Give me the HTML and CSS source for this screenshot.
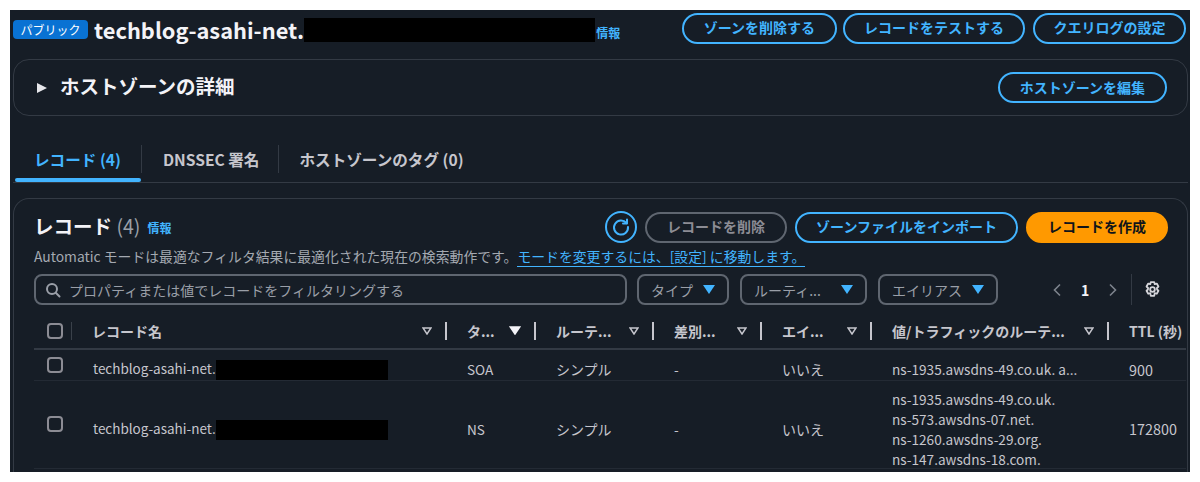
FILE: index.html
```html
<!DOCTYPE html>
<html lang="ja">
<head>
    <meta charset="UTF-8">
    <meta name="viewport" content="width=device-width, initial-scale=1.0">
    <title>ホストゾーン</title>
    <link rel="stylesheet" href="styles.css">
</head>
<body>
    <div class="frame">
        <!-- Page header -->
        <div class="page-header">
            <span class="badge">パブリック</span>
            <h1 class="zone-name">techblog-asahi-net.<span class="redact redact-title"></span></h1>
            <a class="info info-title" href="#">情報</a>
            <div class="header-actions">
                <button class="btn btn-zone">ゾーンを削除する</button>
                <button class="btn btn-test">レコードをテストする</button>
                <button class="btn btn-log">クエリログの設定</button>
            </div>
        </div>

        <!-- Zone details -->
        <div class="card details">
            <span class="caret-right"></span>
            <h2 class="details-title">ホストゾーンの詳細</h2>
            <button class="btn btn-edit">ホストゾーンを編集</button>
        </div>

        <!-- Tabs -->
        <div class="tabs">
            <a class="tab tab-active" href="#">レコード (4)</a>
            <a class="tab tab-dnssec" href="#">DNSSEC 署名</a>
            <a class="tab tab-tags" href="#">ホストゾーンのタグ (0)</a>
        </div>

        <!-- Records -->
        <div class="card records">
            <div class="records-head">
                <h2 class="records-title">レコード <span class="count">(4)</span></h2>
                <a class="info" href="#">情報</a>
                <div class="records-actions">
                    <button class="btn-refresh" aria-label="更新">
                        <svg width="20" height="20" viewBox="0 0 20 20" fill="none" stroke="currentColor" stroke-width="2" stroke-linecap="round" stroke-linejoin="round">
                            <path d="M15.5 6.2A7 7 0 1 0 17 10"/>
                            <path d="M16 2.5v4h-4"/>
                        </svg>
                    </button>
                    <button class="btn btn-disabled">レコードを削除</button>
                    <button class="btn btn-import">ゾーンファイルをインポート</button>
                    <button class="btn btn-primary">レコードを作成</button>
                </div>
            </div>
            <p class="mode-text">Automatic モードは最適なフィルタ結果に最適化された現在の検索動作です。<a href="#">モードを変更するには、[設定] に移動します。</a></p>

            <div class="filters">
                <div class="search">
                    <svg width="16" height="16" viewBox="0 0 16 16" fill="none" stroke="currentColor" stroke-width="2" stroke-linecap="round">
                        <circle cx="7" cy="7" r="5"/>
                        <path d="M11 11l3.5 3.5"/>
                    </svg>
                    <span>プロパティまたは値でレコードをフィルタリングする</span>
                </div>
                <div class="select select-type"><span>タイプ</span><i class="caret-down"></i></div>
                <div class="select select-routing"><span>ルーティ...</span><i class="caret-down"></i></div>
                <div class="select select-alias"><span>エイリアス</span><i class="caret-down"></i></div>
                <div class="pager">
                    <svg width="10" height="14" viewBox="0 0 10 14" fill="none" stroke="currentColor" stroke-width="1.6"><path d="M8 1.5L2.5 7 8 12.5"/></svg>
                    <b>1</b>
                    <svg width="10" height="14" viewBox="0 0 10 14" fill="none" stroke="currentColor" stroke-width="1.6"><path d="M2 1.5L7.5 7 2 12.5"/></svg>
                </div>
                <div class="settings">
                    <svg width="17" height="17" viewBox="0 0 16 16" fill="none" stroke="currentColor" stroke-width="1.7" stroke-linejoin="round">
                        <path d="M6.4 1h3.2l.5 2 1.9-.6 1.6 2.8-1.4 1.4.1 1.4 1.3 1.2-1.6 2.8-1.9-.6-.5 2.6H6.4l-.5-2.6-1.9.6-1.6-2.8 1.3-1.2.1-1.4-1.4-1.4L4 2.4l1.9.6z"/>
                        <circle cx="8" cy="8" r="2.2"/>
                    </svg>
                </div>
            </div>

            <table class="record-table">
                <thead>
                    <tr>
                        <th class="col-check"><div class="th-check"><span class="checkbox"></span></div></th>
                        <th class="col-name"><div class="th-inner"><span>レコード名</span><svg class="sort" width="10" height="8" viewBox="0 0 10 8"><path d="M1 1h8L5 7z"/></svg></div></th>
                        <th class="col-type"><div class="th-inner"><span>タ...</span><svg class="sort sort-active" width="12" height="9" viewBox="0 0 10 8"><path d="M1 1h8L5 7z"/></svg></div></th>
                        <th class="col-routing"><div class="th-inner"><span>ルーテ...</span><svg class="sort" width="10" height="8" viewBox="0 0 10 8"><path d="M1 1h8L5 7z"/></svg></div></th>
                        <th class="col-diff"><div class="th-inner"><span>差別...</span><svg class="sort" width="10" height="8" viewBox="0 0 10 8"><path d="M1 1h8L5 7z"/></svg></div></th>
                        <th class="col-alias"><div class="th-inner"><span>エイ...</span><svg class="sort" width="10" height="8" viewBox="0 0 10 8"><path d="M1 1h8L5 7z"/></svg></div></th>
                        <th class="col-value"><div class="th-inner"><span>値/トラフィックのルーテ...</span><svg class="sort" width="10" height="8" viewBox="0 0 10 8"><path d="M1 1h8L5 7z"/></svg></div></th>
                        <th class="col-ttl"><div class="th-inner th-last"><span>TTL (秒)</span></div></th>
                    </tr>
                </thead>
                <tbody>
                    <tr>
                        <td class="cell-check"><span class="checkbox"></span></td>
                        <td>techblog-asahi-net.<span class="redact redact-row"></span></td>
                        <td>SOA</td>
                        <td class="cell-ja">シンプル</td>
                        <td>-</td>
                        <td class="cell-ja">いいえ</td>
                        <td>ns-1935.awsdns-49.co.uk. a...</td>
                        <td class="cell-ttl">900</td>
                    </tr>
                    <tr>
                        <td class="cell-check"><span class="checkbox"></span></td>
                        <td>techblog-asahi-net.<span class="redact redact-row"></span></td>
                        <td>NS</td>
                        <td class="cell-ja">シンプル</td>
                        <td>-</td>
                        <td class="cell-ja">いいえ</td>
                        <td class="cell-values"><div>ns-1935.awsdns-49.co.uk.<br>ns-573.awsdns-07.net.<br>ns-1260.awsdns-29.org.<br>ns-147.awsdns-18.com.</div></td>
                        <td class="cell-ttl">172800</td>
                    </tr>
                </tbody>
            </table>
        </div>
    </div>
</body>
</html>
```

FILE: styles.css
```css
/* General Styles */
* {
    box-sizing: border-box;
}

body {
    font-family: 'Noto Sans CJK JP', 'Noto Sans', sans-serif;
    margin: 0;
    padding: 10px;
    background-color: #fff;
    color: #c6c6cd;
}

.frame {
    height: 462px;
    overflow: hidden;
    background-color: #161d26;
    padding: 0 2px 0 3px;
}

h1, h2, p {
    margin: 0;
}

a {
    color: #42b4ff;
    text-decoration: none;
}

/* Buttons */
.btn {
    font-family: inherit;
    font-size: 14px;
    font-weight: 700;
    line-height: 18px;
    height: 31px;
    padding: 0 20px 2px;
    color: #42b4ff;
    background: transparent;
    border: 2px solid #42b4ff;
    border-radius: 16px;
    white-space: nowrap;
}

.btn-disabled {
    color: #8c8c94;
    border-color: #5f6670;
}

.btn-primary {
    color: #0f141a;
    background-color: #ff9900;
    border-color: #ff9900;
}

/* Page header */
.page-header {
    display: flex;
    align-items: flex-start;
    height: 49px;
    padding: 3px 2px 0 0;
}

.badge {
    background-color: #0972d3;
    color: #fff;
    font-size: 12px;
    line-height: 19px;
    width: 75px;
    margin-top: 7px;
    text-align: center;
    border-radius: 4px;
}

.zone-name {
    display: flex;
    align-items: center;
    margin: 4px 0 0 6px;
    font-size: 21.8px;
    font-weight: 700;
    color: #f3f3f7;
    line-height: 24px;
}

.zone-name .redact {
    margin-top: 1px;
}

.redact {
    display: inline-block;
    background-color: #000;
}

.redact-title {
    width: 291px;
    height: 24px;
}

.info {
    font-size: 12px;
    font-weight: 700;
}

.info-title {
    margin: 11px 0 0 1px;
}

.header-actions {
    display: flex;
    margin-left: auto;
}

.btn-zone {
    padding: 0 20px 4px;
    margin-right: 6px;
}

.btn-test {
    padding: 0 19px 4px;
    margin-right: 8px;
}

.btn-log {
    padding: 0 18.5px 4px;
}

/* Cards */
.card {
    border: 1px solid #333a44;
    border-radius: 16px;
}

.details {
    display: flex;
    align-items: center;
    height: 57px;
    padding: 0 20px 0 23px;
}

.caret-right {
    width: 0;
    height: 0;
    border-left: 10px solid #e6e6ea;
    border-top: 5px solid transparent;
    border-bottom: 5px solid transparent;
}

.details-title {
    margin: -4px 0 0 13px;
    font-size: 19.5px;
    font-weight: 700;
    color: #f3f3f7;
}

.btn-edit {
    margin-left: auto;
}

/* Tabs */
.tabs {
    display: flex;
    align-items: flex-start;
    height: 38px;
    margin-top: 29px;
    border-bottom: 1px solid #333a44;
}

.tab {
    position: relative;
    display: block;
    padding: 0 20px 0 21px;
    font-size: 15.6px;
    font-weight: 700;
    line-height: 28px;
    color: #c6c6cd;
    border-left: 1px solid #333a44;
}

.tab:first-child {
    margin-left: 2px;
    padding-left: 19px;
    border-left: none;
}

.tab-dnssec {
    padding-right: 19px;
}

.tab-tags {
    padding-left: 20px;
}

.tab-active {
    color: #42b4ff;
}

.tab-active::after {
    content: "";
    position: absolute;
    left: 0;
    right: 0;
    top: 33px;
    height: 4px;
    border-radius: 2px;
    background-color: #42b4ff;
}

/* Records */
.records {
    margin-top: 15px;
    height: 300px;
    padding: 12px 0 0 20px;
    border-bottom: none;
}

.records-head {
    display: flex;
    align-items: center;
    height: 32px;
    padding-right: 19px;
}

.records-title {
    margin-top: -4px;
    font-size: 19.5px;
    font-weight: 700;
    color: #f3f3f7;
}

.count {
    font-weight: 400;
    color: #9ba0a8;
}

.records-head .info {
    margin: 1px 0 0 7px;
}

.records-actions {
    display: flex;
    align-items: center;
    gap: 8px;
    margin-left: auto;
}

.btn-refresh {
    width: 32px;
    height: 32px;
    padding: 0;
    display: flex;
    align-items: center;
    justify-content: center;
    color: #42b4ff;
    background: transparent;
    border: 2px solid #42b4ff;
    border-radius: 50%;
}

.btn-import {
    padding: 0 19px 2px;
}

.mode-text {
    margin-top: 3px;
    font-size: 13.85px;
    line-height: 20px;
    color: #a4a9b1;
    white-space: nowrap;
}

.mode-text a {
    border-bottom: 1px solid #42b4ff;
}

/* Filters */
.filters {
    display: flex;
    align-items: center;
    margin-top: 8px;
    height: 31px;
    color: #9a9fa8;
}

.search {
    display: flex;
    align-items: center;
    gap: 8px;
    width: 593px;
    height: 31px;
    padding-left: 9px;
    border: 2px solid #5f6670;
    border-radius: 8px;
    font-size: 14px;
}

.select {
    display: flex;
    align-items: center;
    justify-content: space-between;
    height: 31px;
    margin-left: 11px;
    padding: 0 12px;
    border: 2px solid #5f6670;
    border-radius: 8px;
    font-size: 14px;
}

.select-type {
    width: 92px;
    margin-left: 10px;
}

.select-routing {
    width: 127px;
}

.select-alias {
    width: 120px;
}

.caret-down {
    width: 0;
    height: 0;
    border-top: 9px solid #42b4ff;
    border-left: 6px solid transparent;
    border-right: 6px solid transparent;
}

.pager {
    display: flex;
    align-items: center;
    gap: 19px;
    margin-left: 54px;
    color: #7d838c;
    font-size: 14px;
}

.pager b {
    color: #f3f3f7;
}

.settings {
    display: flex;
    align-items: center;
    height: 31px;
    margin-left: 13px;
    padding-left: 12px;
    color: #d5d5da;
    border-left: 1px solid #333a44;
}

/* Table */
.record-table {
    width: 1152px;
    margin-top: 8px;
    border-collapse: collapse;
    table-layout: fixed;
    font-size: 13.6px;
}

.col-check { width: 58px; }
.col-name { width: 355px; }
.col-type { width: 89px; }
.col-routing { width: 118px; }
.col-diff { width: 108px; }
.col-alias { width: 110px; }
.col-value { width: 237px; }
.col-ttl { width: 77px; }

.record-table th {
    height: 36px;
    padding: 0;
    text-align: left;
    font-size: 14px;
    font-weight: 700;
    color: #c6c6cd;
    border-bottom: 2px solid #333a44;
}

.th-inner {
    display: flex;
    align-items: center;
    justify-content: space-between;
    height: 18px;
    padding: 0 13px 0 20px;
    border-right: 2px solid #c6c6cd;
    white-space: nowrap;
}

.col-name .th-inner {
    padding-left: 0;
}

.th-last {
    padding-right: 0;
    border-right: none;
}

.th-check {
    display: flex;
    align-items: center;
    height: 18px;
    padding-left: 13px;
    margin-right: 20px;
    border-right: 1px solid #3a414a;
}

.sort {
    flex: none;
    fill: none;
    stroke: #c6c6cd;
    stroke-width: 1.5;
}

.sort-active {
    fill: #f3f3f7;
    stroke: #f3f3f7;
}

.checkbox {
    display: inline-block;
    width: 16px;
    height: 16px;
    vertical-align: middle;
    border: 2px solid #8c8c94;
    border-radius: 4px;
}

.record-table td {
    padding: 8px 0 0 20px;
    color: #c6c6cd;
    height: 30px;
    border-bottom: 1px solid #232a34;
    white-space: nowrap;
}

.record-table td:nth-child(2) {
    padding-left: 1px;
    font-size: 13.5px;
}

.record-table td.cell-check {
    padding: 0 0 5px 13px;
}

.record-table td.cell-ja {
    font-size: 14px;
}

.record-table td.cell-ttl {
    font-size: 14.4px;
}

.record-table td.cell-values {
    height: 87px;
    padding-top: 8px;
    line-height: 20px;
}

.cell-values div {
    margin-bottom: -1px;
}

.redact-row {
    width: 172px;
    height: 20px;
    vertical-align: middle;
}
```
